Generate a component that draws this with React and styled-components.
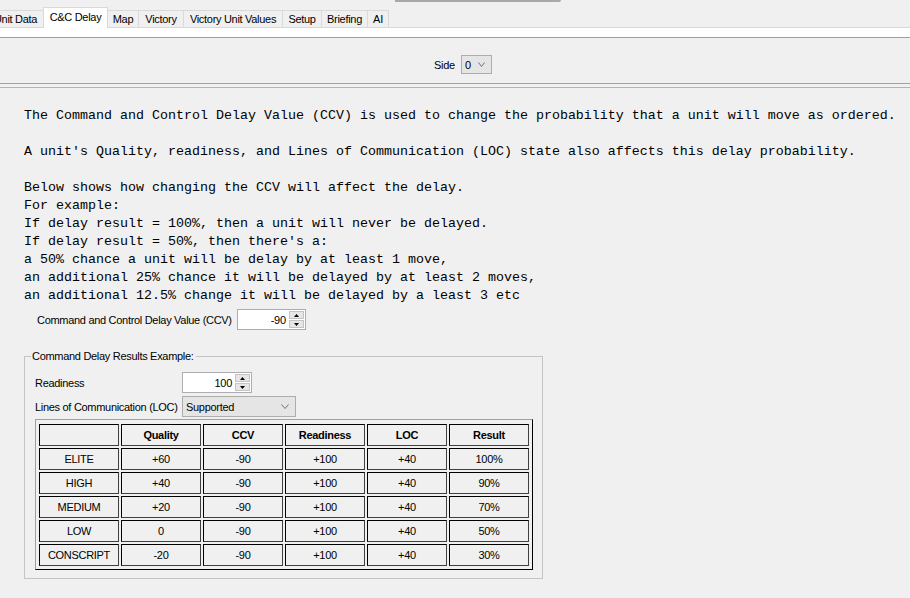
import styled, { createGlobalStyle } from "styled-components";

const GlobalStyle = createGlobalStyle`
  body {
    margin: 0;
    background: #f0f0f0;
    overflow: hidden;
  }
`;

const Page = styled.div`
  width: 910px;
  height: 598px;
  overflow: hidden;
  background: #f0f0f0;
  font-family: "Liberation Sans", Arial, sans-serif;
  font-size: 11px;
  letter-spacing: -0.3px;
  color: #000000;
`;

const TopStrip = styled.div`
  height: 7px;
`;

const TopEdge = styled.div`
  margin-left: 395px;
  width: 166px;
  height: 0;
  border-bottom: 2px solid #a8a8a8;
  border-bottom-right-radius: 3px;
`;

const TabStrip = styled.div`
  display: flex;
  align-items: flex-end;
  height: 20px;
  margin-left: -12px;
  border-bottom: 1px solid #d9d9d9;
`;

const Tab = styled.div`
  box-sizing: border-box;
  width: ${(p) => p.$w}px;
  height: ${(p) => (p.$active ? 21 : 17)}px;
  margin-bottom: ${(p) => (p.$active ? -1 : 0)}px;
  margin-left: -1px;
  display: flex;
  align-items: center;
  justify-content: center;
  padding-bottom: ${(p) => (p.$active ? 2 : 0)}px;
  border: 1px solid #d9d9d9;
  border-bottom: none;
  background: ${(p) => (p.$active ? "#ffffff" : "#f0f0f0")};
  white-space: nowrap;
  position: relative;
  z-index: ${(p) => (p.$active ? 1 : 0)};
`;

const WhiteBand = styled.div`
  height: 9px;
  background: #ffffff;
  border-bottom: 1px solid #a0a0a0;
`;

const SidePanel = styled.div`
  box-sizing: border-box;
  height: 45px;
  padding: 8px 0 0 16px;
  display: flex;
  align-items: center;
  justify-content: center;
  gap: 6px;
`;

const Separator = styled.div`
  height: 3px;
  border-top: 1px solid #a0a0a0;
  border-bottom: 1px solid #b4b4b4;
`;

const Main = styled.div`
  padding-top: 19px;
`;

const Description = styled.pre`
  margin: 0;
  padding-left: 24px;
  font-family: "Liberation Mono", "Courier New", monospace;
  font-size: 13.33px;
  line-height: 18px;
  letter-spacing: 0;
  color: #000000;
`;

const FieldRow = styled.div`
  display: flex;
  align-items: center;
  gap: 5px;
  margin-top: 4px;
  padding-left: 37px;
`;

const Combo = styled.div`
  box-sizing: border-box;
  width: ${(p) => p.$w}px;
  height: ${(p) => p.$h}px;
  display: flex;
  align-items: center;
  justify-content: space-between;
  padding: 0 6px 0 3px;
  background: #e5e5e5;
  border: 1px solid #adadad;
`;

const Spinner = styled.div`
  box-sizing: border-box;
  width: ${(p) => p.$w}px;
  height: 21px;
  display: flex;
  background: #ffffff;
  border: 1px solid #abadb3;
`;

const SpinValue = styled.div`
  flex: 1;
  display: flex;
  align-items: center;
  justify-content: flex-end;
  padding-right: 3px;
`;

const SpinButtons = styled.div`
  width: 15px;
  display: flex;
  flex-direction: column;
  gap: 1px;
  padding: 1px 1px 1px 0;
`;

const SpinButton = styled.div`
  flex: 1;
  display: flex;
  align-items: center;
  justify-content: center;
  background: #e6e6e6;
  border: 1px solid #c4c4c4;
`;

const GroupBox = styled.div`
  box-sizing: border-box;
  width: 519px;
  margin: 26px 0 0 24px;
  padding: 0 8px 8px 10px;
  border: 1px solid #c4c4c4;
`;

const GroupTitle = styled.div`
  width: fit-content;
  margin: -8px 0 0 -4px;
  padding: 0 2px 0 1px;
  line-height: 14px;
  background: #f0f0f0;
`;

const FormGrid = styled.div`
  display: grid;
  grid-template-columns: 147px auto;
  row-gap: 3px;
  align-items: center;
  justify-items: start;
  margin-top: 9px;
`;

const Table = styled.div`
  display: grid;
  grid-template-columns: repeat(6, 80px);
  grid-auto-rows: 22px;
  gap: 2px;
  width: fit-content;
  margin-top: 2px;
  padding: 4px 3px 3px 3px;
  border: 1px solid;
  border-color: #a0a0a0 #000000 #000000 #a0a0a0;
`;

const Cell = styled.div`
  box-sizing: border-box;
  display: flex;
  align-items: center;
  justify-content: center;
  border: 1px solid;
  border-color: #000000 #404040 #404040 #000000;
  font-weight: ${(p) => (p.$head ? "bold" : "normal")};
`;

function Chevron({ w = 8 }) {
  return (
    <svg width={w} height="5" viewBox={`0 0 ${w} 5`}>
      <polyline
        points={`0.5,0.5 ${w / 2},4.5 ${w - 0.5},0.5`}
        fill="none"
        stroke="#707070"
        strokeWidth="1"
      />
    </svg>
  );
}

function NumberSpinner({ value, w }) {
  return (
    <Spinner $w={w}>
      <SpinValue>{value}</SpinValue>
      <SpinButtons>
        <SpinButton>
          <svg width="5" height="3" viewBox="0 0 5 3">
            <polygon points="2.5,0 5,3 0,3" fill="#000" />
          </svg>
        </SpinButton>
        <SpinButton>
          <svg width="5" height="3" viewBox="0 0 5 3">
            <polygon points="0,0 5,0 2.5,3" fill="#000" />
          </svg>
        </SpinButton>
      </SpinButtons>
    </Spinner>
  );
}

const tabs = [
  { label: "Unit Data", w: 57 },
  { label: "C&C Delay", w: 65, active: true },
  { label: "Map", w: 32 },
  { label: "Victory", w: 46 },
  { label: "Victory Unit Values", w: 100 },
  { label: "Setup", w: 40 },
  { label: "Briefing", w: 47 },
  { label: "AI", w: 22 },
];

const description = `The Command and Control Delay Value (CCV) is used to change the probability that a unit will move as ordered.

A unit's Quality, readiness, and Lines of Communication (LOC) state also affects this delay probability.

Below shows how changing the CCV will affect the delay.
For example:
If delay result = 100%, then a unit will never be delayed.
If delay result = 50%, then there's a:
a 50% chance a unit will be delay by at least 1 move,
an additional 25% chance it will be delayed by at least 2 moves,
an additional 12.5% change it will be delayed by a least 3 etc`;

const headers = ["", "Quality", "CCV", "Readiness", "LOC", "Result"];

const rows = [
  ["ELITE", "+60", "-90", "+100", "+40", "100%"],
  ["HIGH", "+40", "-90", "+100", "+40", "90%"],
  ["MEDIUM", "+20", "-90", "+100", "+40", "70%"],
  ["LOW", "0", "-90", "+100", "+40", "50%"],
  ["CONSCRIPT", "-20", "-90", "+100", "+40", "30%"],
];

export default function App() {
  return (
    <Page>
      <GlobalStyle />
      <TopStrip>
        <TopEdge />
      </TopStrip>
      <TabStrip>
        {tabs.map((t) => (
          <Tab key={t.label} $w={t.w} $active={t.active}>
            {t.label}
          </Tab>
        ))}
      </TabStrip>
      <WhiteBand />
      <SidePanel>
        <span>Side</span>
        <Combo $w={31} $h={19}>
          <span>0</span>
          <Chevron w={7} />
        </Combo>
      </SidePanel>
      <Separator />
      <Main>
        <Description>{description}</Description>
        <FieldRow>
          <span>Command and Control Delay Value (CCV)</span>
          <NumberSpinner value="-90" w={69} />
        </FieldRow>
        <GroupBox>
          <GroupTitle>Command Delay Results Example:</GroupTitle>
          <FormGrid>
            <span>Readiness</span>
            <NumberSpinner value="100" w={70} />
            <span>Lines of Communication (LOC)</span>
            <Combo $w={114} $h={21}>
              <span>Supported</span>
              <Chevron w={8} />
            </Combo>
          </FormGrid>
          <Table>
            {headers.map((h, i) => (
              <Cell key={"h" + i} $head>
                {h}
              </Cell>
            ))}
            {rows.map((r) =>
              r.map((c, i) => <Cell key={r[0] + i}>{c}</Cell>)
            )}
          </Table>
        </GroupBox>
      </Main>
    </Page>
  );
}
